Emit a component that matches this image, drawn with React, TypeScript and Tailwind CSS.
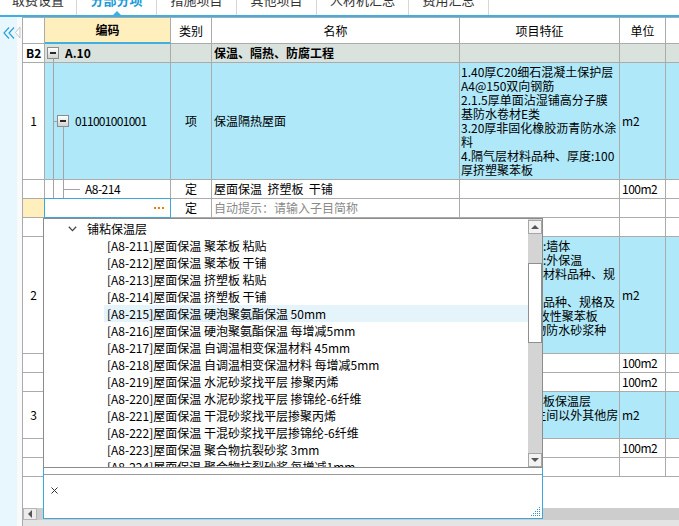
import React from "react";

const BLUE = "bg-[#aee8f9]";
const B2BG = "bg-[#dae2de]";

type CellProps = { w: string; bg?: string; className?: string; children?: React.ReactNode };

function Cell({ w, bg = "", className = "", children }: CellProps) {
  return (
    <div
      className={`${w} ${bg} shrink-0 h-full border-r border-b border-[#ababab] flex items-center overflow-hidden relative ${className}`}
    >
      {children}
    </div>
  );
}

function LastCell({ bg = "" }: { bg?: string }) {
  return <div className={`flex-1 h-full border-b border-[#ababab] ${bg}`} />;
}

function TreeBox() {
  return (
    <div className="w-[12px] h-[12px] border border-[#8c8c8c] bg-linear-to-b from-white to-[#d2d2d2] flex items-center justify-center shrink-0">
      <div className="w-[6px] h-[2px] bg-[#2a2a2a]" />
    </div>
  );
}

const tabs = [
  { t: "取费设置", w: "w-[77px]" },
  { t: "分部分项", w: "w-[80px]", active: true },
  { t: "措施项目", w: "w-[80px]" },
  { t: "其他项目", w: "w-[80px]" },
  { t: "人材机汇总", w: "w-[92px]" },
  { t: "费用汇总", w: "w-[80px]" },
];

const items = [
  "[A8-211]屋面保温 聚苯板 粘贴",
  "[A8-212]屋面保温 聚苯板 干铺",
  "[A8-213]屋面保温 挤塑板 粘贴",
  "[A8-214]屋面保温 挤塑板 干铺",
  "[A8-215]屋面保温 硬泡聚氨酯保温 50mm",
  "[A8-216]屋面保温 硬泡聚氨酯保温 每增减5mm",
  "[A8-217]屋面保温 自调温相变保温材料 45mm",
  "[A8-218]屋面保温 自调温相变保温材料 每增减5mm",
  "[A8-219]屋面保温 水泥砂浆找平层 掺聚丙烯",
  "[A8-220]屋面保温 水泥砂浆找平层 掺锦纶-6纤维",
  "[A8-221]屋面保温 干混砂浆找平层掺聚丙烯",
  "[A8-222]屋面保温 干混砂浆找平层掺锦纶-6纤维",
  "[A8-223]屋面保温 聚合物抗裂砂浆 3mm",
  "[A8-224]屋面保温 聚合物抗裂砂浆 每增减1mm",
];

const feat1 = [
  "1.40厚C20细石混凝土保护层",
  "A4@150双向钢筋",
  "2.1.5厚单面沾湿铺高分子膜",
  "基防水卷材E类",
  "3.20厚非固化橡胶沥青防水涂",
  "料",
  "4.隔气层材料品种、厚度:100",
  "厚挤塑聚苯板",
];

const feat2 = [
  "1.保温隔热部位:墙体",
  "2.保温隔热方式:外保温",
  "3.保温隔热面层材料品种、规",
  "格、性能:",
  "4.保温隔热材料品种、规格及",
  "厚度:50厚阻燃改性聚苯板",
  "5.抹面层:聚合物防水砂浆种",
  "类:",
];

const feat3 = ["1.屋面挤塑聚苯板保温层", "2.适用部位:卫生间以外其他房", "间"];

function Features({ lines }: { lines: string[] }) {
  return (
    <div className="leading-[14px] whitespace-nowrap pl-[1px]">
      {lines.map((l, i) => (
        <div key={i}>{l}</div>
      ))}
    </div>
  );
}

function PlainRow({ unit }: { unit?: string }) {
  return (
    <div className="flex h-[19px]">
      <Cell w="w-[22px]" />
      <Cell w="w-[126px]" />
      <Cell w="w-[41px]" />
      <Cell w="w-[248px]" />
      <Cell w="w-[160px]" />
      <Cell w="w-[46px]" className="pl-[2px] tracking-[-0.5px]">
        {unit}
      </Cell>
      <LastCell />
    </div>
  );
}

export default function App() {
  return (
    <div className="w-[679px] h-[526px] overflow-hidden relative bg-white text-black font-['Noto_Sans_CJK_SC',sans-serif]">
      {/* tab bar */}
      <div className="h-[17px] flex border-b-2 border-[#3cb0e3] overflow-hidden bg-white">
        {tabs.map((tb) => (
          <div
            key={tb.t}
            className={`${tb.w} h-full shrink-0 border-r border-[#d8d8d8] relative flex justify-center overflow-hidden`}
          >
            <div
              className={`mt-[-7px] text-[13px] leading-[13px] whitespace-nowrap ${
                tb.active ? "text-[#1b9bd7] font-bold" : "text-[#333333]"
              }`}
            >
              {tb.t}
            </div>
            {tb.active && (
              <div className="absolute bottom-0 left-1/2 -translate-x-1/2 w-0 h-0 border-x-[4px] border-x-transparent border-b-[4px] border-b-[#3cb0e3]" />
            )}
          </div>
        ))}
      </div>

      <div className="flex h-[509px]">
        {/* left collapse panel */}
        <div className="w-[17px] h-full bg-[#e8f7fd] shrink-0 pt-[10px] pl-[3px]">
          <svg width="12" height="12" viewBox="0 0 12 12">
            <polyline points="6,0.5 1,6 6,11.5" fill="none" stroke="#2d9fd9" strokeWidth="1.2" />
            <polyline points="11,0.5 6,6 11,11.5" fill="none" stroke="#2d9fd9" strokeWidth="1.2" />
          </svg>
        </div>
        <div className="w-[5px] h-full bg-[#fafafa] shrink-0 relative">
          <svg className="absolute left-[-2px] top-[10px] overflow-visible" width="6" height="11">
            <polygon points="5,0 0.5,5.5 5,11" fill="#ffffff" stroke="#c4c4c4" strokeWidth="1" />
          </svg>
        </div>

        {/* grid */}
        <div className="flex-1 h-full flex flex-col border-l border-t border-[#ababab] text-[12px] min-w-0">
          {/* header */}
          <div className="flex h-[26px] shrink-0">
            <Cell w="w-[22px]" />
            <Cell
              w="w-[126px]"
              bg="bg-[#feefbd]"
              className="justify-center font-bold border-b-2 border-b-[#3fb0e0]"
            >
              编码
            </Cell>
            <Cell w="w-[41px]" className="justify-center">
              类别
            </Cell>
            <Cell w="w-[248px]" className="justify-center">
              名称
            </Cell>
            <Cell w="w-[160px]" className="justify-center">
              项目特征
            </Cell>
            <Cell w="w-[46px]" className="justify-center">
              单位
            </Cell>
            <LastCell />
          </div>

          {/* B2 row */}
          <div className="flex h-[19px] shrink-0">
            <Cell w="w-[22px]" className="font-bold pl-[3px]">
              B2
            </Cell>
            <Cell w="w-[126px]" bg={B2BG}>
              <svg className="absolute left-0 top-0" width="20" height="18" shapeRendering="crispEdges">
                <line x1="8.5" y1="15" x2="8.5" y2="18" stroke="#a3a3a3" />
              </svg>
              <div className="ml-[2px] relative">
                <TreeBox />
              </div>
              <span className="ml-[6px] font-bold relative">A.10</span>
            </Cell>
            <Cell w="w-[41px]" bg={B2BG} />
            <Cell w="w-[248px]" bg={B2BG} className="font-bold pl-[2px]">
              保温、隔热、防腐工程
            </Cell>
            <Cell w="w-[160px]" bg={B2BG} />
            <Cell w="w-[46px]" bg={B2BG} />
            <LastCell bg={B2BG} />
          </div>

          {/* row 1 */}
          <div className="flex h-[117px] shrink-0">
            <Cell w="w-[22px]" className="justify-center">
              1
            </Cell>
            <Cell w="w-[126px]" bg={BLUE}>
              <svg className="absolute left-0 top-0" width="30" height="116" shapeRendering="crispEdges">
                <line x1="8.5" y1="0" x2="8.5" y2="116" stroke="#a3a3a3" />
                <line x1="8" y1="58.5" x2="12" y2="58.5" stroke="#a3a3a3" />
                <line x1="18.5" y1="64" x2="18.5" y2="116" stroke="#a3a3a3" />
              </svg>
              <div className="ml-[12px] relative">
                <TreeBox />
              </div>
              <span className="ml-[6px] relative tracking-[-0.7px]">011001001001</span>
            </Cell>
            <Cell w="w-[41px]" bg={BLUE} className="justify-center">
              项
            </Cell>
            <Cell w="w-[248px]" bg={BLUE} className="pl-[2px]">
              保温隔热屋面
            </Cell>
            <Cell w="w-[160px]" bg={BLUE}>
              <Features lines={feat1} />
            </Cell>
            <Cell w="w-[46px]" bg={BLUE} className="pl-[2px]">
              m2
            </Cell>
            <LastCell bg={BLUE} />
          </div>

          {/* A8-214 */}
          <div className="flex h-[19px] shrink-0">
            <Cell w="w-[22px]" />
            <Cell w="w-[126px]">
              <svg className="absolute left-0 top-0" width="40" height="18" shapeRendering="crispEdges">
                <line x1="8.5" y1="0" x2="8.5" y2="18" stroke="#a3a3a3" />
                <line x1="18.5" y1="0" x2="18.5" y2="18" stroke="#a3a3a3" />
                <line x1="19" y1="9.5" x2="35" y2="9.5" stroke="#a3a3a3" />
              </svg>
              <span className="ml-[40px] relative tracking-[-0.5px]">A8-214</span>
            </Cell>
            <Cell w="w-[41px]" className="justify-center">
              定
            </Cell>
            <Cell w="w-[248px]" className="pl-[2px] whitespace-pre">
              屋面保温  挤塑板  干铺
            </Cell>
            <Cell w="w-[160px]" />
            <Cell w="w-[46px]" className="pl-[2px] tracking-[-0.5px]">
              100m2
            </Cell>
            <LastCell />
          </div>

          {/* editing row */}
          <div className="flex h-[19px] shrink-0">
            <Cell w="w-[22px]" bg="bg-[#feefbd]" />
            <div className="w-[126px] shrink-0 h-full border-r border-b border-[#ababab] relative">
              <div className="absolute -inset-px border border-[#3aa7dd] bg-white flex items-center justify-end pr-[6px] gap-[2px]">
                <div className="w-[2px] h-[2px] bg-[#f07d00]" />
                <div className="w-[2px] h-[2px] bg-[#f07d00]" />
                <div className="w-[2px] h-[2px] bg-[#f07d00]" />
              </div>
            </div>
            <Cell w="w-[41px]" className="justify-center">
              定
            </Cell>
            <Cell w="w-[248px]" className="pl-[2px] text-[#8a8a8a]">
              自动提示：请输入子目简称
            </Cell>
            <Cell w="w-[160px]" />
            <Cell w="w-[46px]" />
            <LastCell />
          </div>

          <PlainRow />

          {/* row 2 */}
          <div className="flex h-[117px] shrink-0">
            <Cell w="w-[22px]" className="justify-center">
              2
            </Cell>
            <Cell w="w-[126px]" bg={BLUE} />
            <Cell w="w-[41px]" bg={BLUE} />
            <Cell w="w-[248px]" bg={BLUE} />
            <Cell w="w-[160px]" bg={BLUE}>
              <Features lines={feat2} />
            </Cell>
            <Cell w="w-[46px]" bg={BLUE} className="pl-[2px]">
              m2
            </Cell>
            <LastCell bg={BLUE} />
          </div>

          <PlainRow unit="100m2" />
          <PlainRow unit="100m2" />

          {/* row 3 */}
          <div className="flex h-[47px] shrink-0">
            <Cell w="w-[22px]" className="justify-center">
              3
            </Cell>
            <Cell w="w-[126px]" bg={BLUE} />
            <Cell w="w-[41px]" bg={BLUE} />
            <Cell w="w-[248px]" bg={BLUE} />
            <Cell w="w-[160px]" bg={BLUE}>
              <Features lines={feat3} />
            </Cell>
            <Cell w="w-[46px]" bg={BLUE} className="pl-[2px]">
              m2
            </Cell>
            <LastCell bg={BLUE} />
          </div>

          <PlainRow unit="100m2" />
          <PlainRow />

          <div className="flex-1" />

          {/* horizontal scrollbar */}
          <div className="h-[12px] shrink-0 bg-[#cdcdcd] flex">
            <div className="w-[14px] h-full bg-[#ececec] border border-[#b5b5b5] flex items-center justify-center">
              <div className="w-0 h-0 border-y-[4px] border-y-transparent border-r-[4px] border-r-[#555555]" />
            </div>
          </div>
          <div className="h-[6px] shrink-0 bg-[#e4e4e4]" />
        </div>
      </div>

      {/* dropdown */}
      <div className="absolute left-[43px] top-[218px] w-[500px]">
        <div className="h-[250px] border border-[#8c8c8c] bg-white flex">
          <div className="flex-1 overflow-hidden pt-[1px] text-[12px] text-black min-w-0">
            <div className="h-[17px] flex items-center">
              <svg className="ml-[24px]" width="9" height="6" viewBox="0 0 9 6">
                <polyline points="0.8,0.8 4.5,4.6 8.2,0.8" fill="none" stroke="#444444" strokeWidth="1.3" />
              </svg>
              <span className="ml-[10px] leading-[17px]">铺粘保温层</span>
            </div>
            {items.map((it, i) => (
              <div
                key={it}
                className={`h-[17px] leading-[17px] ml-[60px] pl-[3px] whitespace-nowrap ${
                  i === 4 ? "bg-[#e5f3fb]" : ""
                }`}
              >
                {it}
              </div>
            ))}
          </div>
          {/* vertical scrollbar */}
          <div className="w-[14px] h-full shrink-0 pt-[1px] flex flex-col bg-[#d4d4d4]">
            <div className="h-[14px] shrink-0 border border-[#a6a6a6] bg-[#f2f2f2] flex items-center justify-center">
              <div className="w-0 h-0 border-x-[4px] border-x-transparent border-b-[4px] border-b-[#555555]" />
            </div>
            <div className="h-[29px] shrink-0" />
            <div className="h-[80px] shrink-0 border border-[#8f8f8f] bg-white" />
            <div className="flex-1" />
            <div className="h-[14px] shrink-0 border border-[#a6a6a6] bg-[#f2f2f2] flex items-center justify-center">
              <div className="w-0 h-0 border-x-[4px] border-x-transparent border-t-[4px] border-t-[#555555]" />
            </div>
          </div>
        </div>
        <div className="h-[51px] border-x border-b border-[#3aa7dd] bg-white flex flex-col">
          <div className="h-[7px] shrink-0 border-b border-[#9a9a9a]" />
          <div className="flex-1 relative">
            <svg className="ml-[7px] mt-[12px]" width="7" height="7" viewBox="0 0 7 7">
              <line x1="0.5" y1="0.5" x2="6.5" y2="6.5" stroke="#333333" strokeWidth="1" />
              <line x1="6.5" y1="0.5" x2="0.5" y2="6.5" stroke="#333333" strokeWidth="1" />
            </svg>
            <svg className="absolute right-[2px] bottom-[2px]" width="9" height="9" shapeRendering="crispEdges">
              {[0, 2, 4, 6, 8].flatMap((x) =>
                [0, 2, 4, 6, 8]
                  .filter((y) => x + y >= 8)
                  .map((y) => <rect key={`${x}-${y}`} x={x} y={y} width="1" height="1" fill="#3a8fd0" />)
              )}
            </svg>
          </div>
        </div>
      </div>
    </div>
  );
}
